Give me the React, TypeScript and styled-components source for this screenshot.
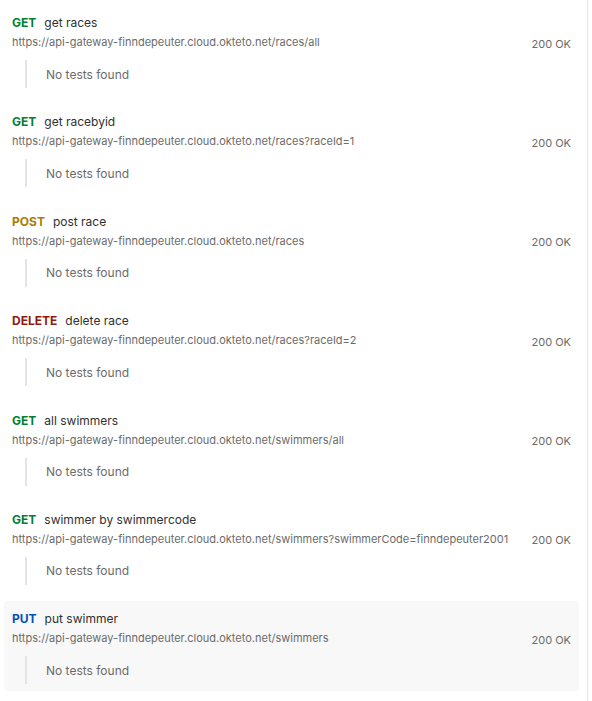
import React from "react";
import styled, { createGlobalStyle } from "styled-components";

const Global = createGlobalStyle`
  html, body { margin: 0; padding: 0; background: #ffffff; }
  body { font-family: Inter, "Open Sans", "Liberation Sans", sans-serif; -webkit-font-smoothing: antialiased; }
`;

const Panel = styled.div`
  box-sizing: border-box;
  width: 588px;
  height: 701px;
  border-right: 1px solid #e6e6e6;
  padding: 5px 8px 0 4px;
  display: flex;
  flex-direction: column;
  gap: 9.2px;
`;

const Item = styled.div<{ $active?: boolean }>`
  box-sizing: border-box;
  height: 90.2px;
  padding: 11px 8px 6px 8px;
  border-radius: 4px;
  background: ${(p) => (p.$active ? "#f8f8f8" : "transparent")};
  display: flex;
  flex-direction: column;
`;

const TitleRow = styled.div`
  display: flex;
  align-items: center;
  height: 14px;
  gap: 8px;
`;

const Method = styled.span<{ $color: string }>`
  font-size: 12px;
  font-weight: 700;
  color: ${(p) => p.$color};
  line-height: 14px;
`;

const Name = styled.span`
  font-size: 12px;
  color: #303030;
  line-height: 14px;
`;

const UrlRow = styled.div`
  display: flex;
  align-items: center;
  justify-content: space-between;
  margin-top: 4px;
  height: 16px;
`;

const Url = styled.span`
  font-size: 11px;
  color: #6b6b6b;
  line-height: 16px;
  white-space: nowrap;
`;

const Status = styled.span`
  font-size: 11px;
  color: #6b6b6b;
  line-height: 16px;
  margin-top: 3px;
  white-space: nowrap;
`;

const Tests = styled.div`
  margin-top: 10px;
  margin-left: 13px;
  height: 28px;
  border-left: 2px solid #e4e4e4;
  padding-left: 19px;
  display: flex;
  align-items: center;
  font-size: 12px;
  color: #6b6b6b;
`;

const colors: Record<string, string> = {
  GET: "#007f31",
  POST: "#ad7a03",
  DELETE: "#8e1a10",
  PUT: "#0053b8",
};

const base = "https://api-gateway-finndepeuter.cloud.okteto.net";

const items = [
  { m: "GET", n: "get races", u: "/races/all" },
  { m: "GET", n: "get racebyid", u: "/races?raceId=1" },
  { m: "POST", n: "post race", u: "/races" },
  { m: "DELETE", n: "delete race", u: "/races?raceId=2" },
  { m: "GET", n: "all swimmers", u: "/swimmers/all" },
  { m: "GET", n: "swimmer by swimmercode", u: "/swimmers?swimmerCode=finndepeuter2001" },
  { m: "PUT", n: "put swimmer", u: "/swimmers", active: true },
];

export default function App() {
  return (
    <>
      <Global />
      <Panel>
        {items.map((it, i) => (
          <Item key={i} $active={it.active}>
            <TitleRow>
              <Method $color={colors[it.m]}>{it.m}</Method>
              <Name>{it.n}</Name>
            </TitleRow>
            <UrlRow>
              <Url>{base + it.u}</Url>
              <Status>200 OK</Status>
            </UrlRow>
            <Tests>No tests found</Tests>
          </Item>
        ))}
      </Panel>
    </>
  );
}
